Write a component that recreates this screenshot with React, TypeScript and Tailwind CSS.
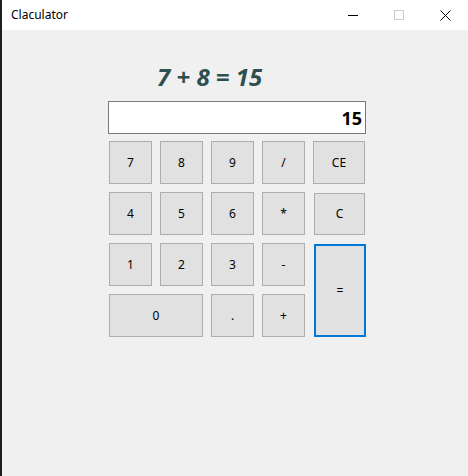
import React from "react";

const btn =
  "flex items-center justify-center bg-[#e1e1e1] border border-[#adadad] text-[12px] text-black";

export default function App() {
  return (
    <div
      className="w-[468px] h-[476px] flex bg-[#1e1e1e] overflow-hidden"
      style={{ fontFamily: '"Noto Sans", "Open Sans", sans-serif' }}
    >
      <div className="w-[2px] shrink-0 bg-[#1e1e1e]" />
      <div className="flex-1 flex flex-col">
        {/* title bar */}
        <div className="h-[30px] bg-white flex items-center shrink-0">
          <span className="ml-[9px] text-[12px] text-black">Claculator</span>
          <div className="ml-auto flex items-center h-full">
            <div className="w-[46px] h-full flex items-center justify-center">
              <svg width="10" height="10" viewBox="0 0 10 10">
                <path d="M0 5.5h10" stroke="#000" strokeWidth="1" />
              </svg>
            </div>
            <div className="w-[46px] h-full flex items-center justify-center">
              <svg width="10" height="10" viewBox="0 0 10 10">
                <rect x="0.5" y="0.5" width="9" height="9" fill="none" stroke="#cccccc" strokeWidth="1" />
              </svg>
            </div>
            <div className="w-[46px] h-full flex items-center justify-center">
              <svg width="11" height="11" viewBox="0 0 11 11">
                <path d="M0.5 0.5L10.5 10.5M10.5 0.5L0.5 10.5" stroke="#000" strokeWidth="1" />
              </svg>
            </div>
          </div>
        </div>
        {/* body */}
        <div className="flex-1 bg-[#f0f0f0] flex flex-col">
          <div
            className="ml-[155px] mt-[32px] h-[30px] text-[24px] leading-[30px] font-bold italic text-[#2f4f4f]"
            style={{ fontFamily: '"Open Sans", "Noto Sans", sans-serif' }}
          >
            7 + 8 = 15
          </div>
          <div className="ml-[106px] mt-[9px] w-[258px] h-[33px] bg-white border border-[#7a7a7a] flex items-center justify-end pr-[3px]">
            <span className="text-[18px] font-bold text-black leading-none">15</span>
          </div>
          <div className="ml-[107px] mt-[7px] grid grid-cols-[43px_43px_43px_43px_52px] grid-rows-[43px_43px_43px_43px] gap-x-[8px] gap-y-[8px]">
            <div className={btn}>7</div>
            <div className={btn}>8</div>
            <div className={btn}>9</div>
            <div className={btn}>/</div>
            <div className={btn}>CE</div>

            <div className={btn}>4</div>
            <div className={btn}>5</div>
            <div className={btn}>6</div>
            <div className={btn}>*</div>
            <div className={btn + " ml-[1px] mt-[1px] h-[42px] w-[51px]"}>C</div>

            <div className={btn}>1</div>
            <div className={btn}>2</div>
            <div className={btn}>3</div>
            <div className={btn}>-</div>
            <div className="row-span-2 ml-[1px] mt-[1px] w-[52px] h-[93px] flex items-center justify-center bg-[#e1e1e1] border-2 border-[#0078d7] text-[12px] text-black">
              =
            </div>

            <div className={btn + " col-span-2"}>0</div>
            <div className={btn}>.</div>
            <div className={btn}>+</div>
          </div>
        </div>
      </div>
    </div>
  );
}
